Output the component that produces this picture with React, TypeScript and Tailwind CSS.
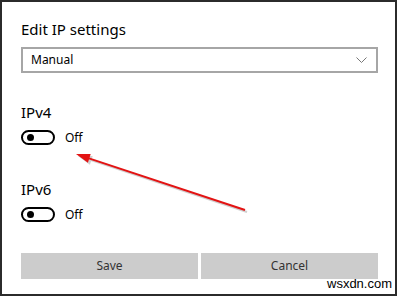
import React from 'react';

const font = { fontFamily: '"Segoe UI", "Noto Sans", "Open Sans", sans-serif' };

/** Windows-style toggle switch in the off state. */
const Toggle: React.FC = () => (
  <div className="flex items-center">
    <div className="w-[34px] h-[15px] rounded-full border-2 border-black flex items-center pl-[4px]">
      <div className="w-[7px] h-[7px] rounded-full bg-black" />
    </div>
    <span className="ml-[10px] text-[12px] text-black leading-none">Off</span>
  </div>
);

export default function App() {
  return (
    <div className="relative w-[400px] h-[298px] bg-white" style={font}>
      <div className="w-[397px] h-[296px] border-2 border-[#2b2b2b] pl-[19px] pr-[17px] flex flex-col">
        <div className="mt-[16px] text-[15px] leading-[22px] text-black">Edit IP settings</div>

        <div className="mt-[7px] h-[26px] border-2 border-[#a6a6a6] flex items-center justify-between pl-[8px] pr-[9px]">
          <span className="text-[12px] text-black">Manual</span>
          <svg width="11" height="6" viewBox="0 0 11 6" fill="none">
            <polyline points="0.5,0.5 5.5,5.5 10.5,0.5" stroke="#777" strokeWidth="1" />
          </svg>
        </div>

        <div className="mt-[28px] text-[15px] leading-[22px] text-black">IPv4</div>
        <div className="mt-[7px]">
          <Toggle />
        </div>

        <div className="mt-[33px] text-[15px] leading-[22px] text-black">IPv6</div>
        <div className="mt-[7px]">
          <Toggle />
        </div>

        <div className="mt-[31px] grid grid-cols-2 gap-[3px]">
          <div className="h-[26px] bg-[#cccccc] flex items-center justify-center text-[12px] text-[#333]">
            Save
          </div>
          <div className="h-[26px] bg-[#cccccc] flex items-center justify-center text-[12px] text-[#333]">
            Cancel
          </div>
        </div>
      </div>

      {/* annotation arrow */}
      <svg className="absolute left-0 top-0" width="400" height="298" viewBox="0 0 400 298">
        <line x1="247" y1="212" x2="91" y2="160" stroke="#b0b0b0" strokeWidth="2" opacity="0.6" />
        <polygon points="78,156 92.7,156.1 89.9,164.7" fill="#b0b0b0" opacity="0.6" />
        <line x1="245" y1="210" x2="89" y2="158.4" stroke="#e31313" strokeWidth="2" />
        <polygon points="76,154 90.7,154.1 87.9,162.7" fill="#e31313" />
      </svg>

      <div
        className="absolute left-[327px] top-[277px] text-[13px] leading-none text-black"
        style={{ fontFamily: '"Liberation Sans", Arial, sans-serif' }}
      >
        wsxdn.com
      </div>
    </div>
  );
}
